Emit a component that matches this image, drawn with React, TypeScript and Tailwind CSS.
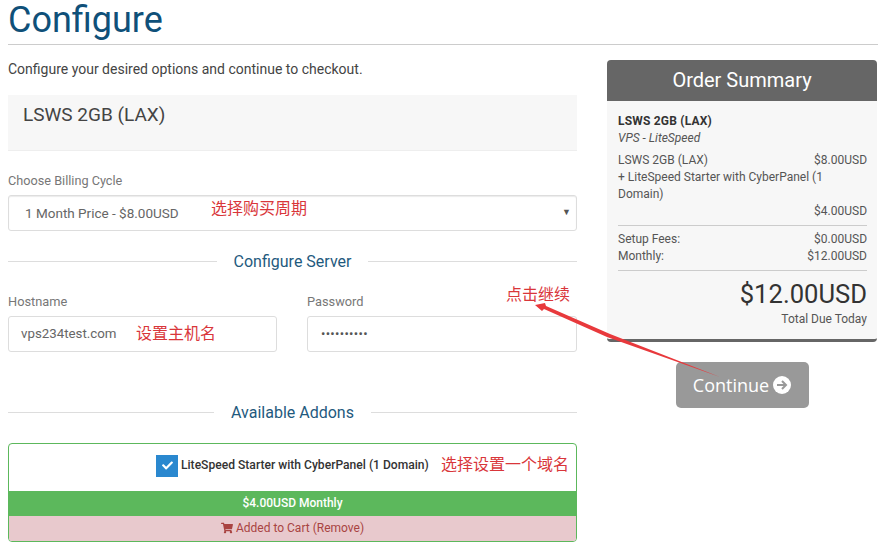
import React from "react";
import { FaShoppingCart, FaCheck } from "react-icons/fa";

const cjk = "absolute text-[16px] leading-[20px] text-[#d9363a] font-['Noto_Sans_CJK_SC',sans-serif] whitespace-nowrap";

function Divider({ title, gap }: { title: string; gap: string }) {
  return (
    <div className="flex items-center h-[20px]">
      <div className="flex-1 h-px mb-[2px] bg-[#dddddd]" />
      <div className={`text-[16px] leading-[20px] text-[#1f5a7e] text-center ${gap}`}>{title}</div>
      <div className="flex-1 h-px mb-[2px] bg-[#dddddd]" />
    </div>
  );
}

function Row({ left, right }: { left: string; right: string }) {
  return (
    <div className="flex justify-between h-[17px] leading-[17px]">
      <span>{left}</span>
      <span>{right}</span>
    </div>
  );
}

export default function App() {
  return (
    <div className="relative w-[885px] h-[549px] overflow-hidden bg-white font-['Roboto',sans-serif] text-[#333333]">
      <div className="pl-2 pr-[7px]">
        <h1 className="h-[45px] border-b border-[#cccccc] text-[36px] leading-[40px] text-[#0f5079] font-normal">Configure</h1>
        <div className="flex gap-[30px]">
          <div className="w-[569px]">
            <p className="mt-[16px] h-[17px] text-[14px] leading-[17px] text-[#444444]">Configure your desired options and continue to checkout.</p>
            <div className="mt-[17px] h-[56px] bg-[#f7f7f7] border-b border-[#eeeeee] px-[15px] pt-[9px] text-[19px] leading-[22px] text-[#444444]">LSWS 2GB (LAX)</div>
            <div className="mt-[22px] h-[16px] text-[12.7px] leading-[16px] text-[#777777]">Choose Billing Cycle</div>
            <div className="mt-[6px] h-[36px] border border-[#dddddd] rounded-[3px] shadow-[inset_0_1px_1px_rgba(0,0,0,0.08)] flex items-center justify-between pl-[16px] pr-[5px] text-[13.5px] text-[#666666]">
              <span className="pt-[1px]">1 Month Price - $8.00USD</span>
              <span className="text-[9px] text-[#555555]">▼</span>
            </div>
            <div className="mt-[21px]">
              <Divider title="Configure Server" gap="px-[17px]" />
            </div>
            <div className="mt-[22px] flex gap-[30px]">
              <div className="w-[269px]">
                <div className="h-[16px] text-[12.8px] leading-[16px] text-[#777777]">Hostname</div>
                <div className="mt-[6px] h-[36px] border border-[#dddddd] rounded-[3px] flex items-center pl-[12px] text-[13.3px] text-[#666666]">vps234test.com</div>
              </div>
              <div className="w-[270px]">
                <div className="h-[16px] text-[12.8px] leading-[16px] text-[#777777]">Password</div>
                <div className="mt-[6px] h-[36px] border border-[#dddddd] rounded-[3px] flex items-center pl-[13px] text-[13px] text-[#555555] tracking-[0.3px]">••••••••••</div>
              </div>
            </div>
            <div className="mt-[51px]">
              <Divider title="Available Addons" gap="px-[17px]" />
            </div>
            <div className="mt-[20px] h-[99px] border border-[#5cb85c] rounded-[4px] overflow-hidden flex flex-col">
              <div className="h-[47px] flex items-center pl-[147px] pb-[4px]">
                <span className="w-[22px] h-[22px] bg-[#2a88cf] flex items-center justify-center text-white">
                  <FaCheck className="text-[11px]" />
                </span>
                <span className="ml-[3px] text-[12.1px] font-medium text-[#333333] whitespace-nowrap">LiteSpeed Starter with CyberPanel (1 Domain)</span>
              </div>
              <div className="h-[25px] bg-[#5cb85c] text-white text-center text-[12px] leading-[25px] font-medium">$4.00USD Monthly</div>
              <div className="h-[25px] pb-[2px] bg-[#e8c9cd] text-[#a94442] text-[12px] flex items-center justify-center gap-[3px]">
                <FaShoppingCart className="text-[12px]" />
                <span>Added to Cart (Remove)</span>
              </div>
            </div>
          </div>
          <div className="w-[270px] pt-[15px]">
            <div className="rounded-[4px] overflow-hidden bg-[#f7f7f7] border-b-[3px] border-[#666666]">
              <div className="h-[41px] bg-[#666666] text-white text-center text-[20px] leading-[41px]">Order Summary</div>
              <div className="pl-[11px] pr-[10px] pt-[12px] pb-[11px] text-[12px] text-[#555555]">
                <div className="h-[17px] leading-[17px] font-bold text-[#333333] tracking-[0.2px]">LSWS 2GB (LAX)</div>
                <div className="h-[17px] leading-[17px] italic">VPS - LiteSpeed</div>
                <div className="mt-[5px]">
                  <Row left="LSWS 2GB (LAX)" right="$8.00USD" />
                  <div className="leading-[17px] w-[215px]">+ LiteSpeed Starter with CyberPanel (1 Domain)</div>
                  <div className="text-right h-[17px] leading-[17px]">$4.00USD</div>
                </div>
                <div className="mt-[5px] pt-[5px] border-t border-[#cccccc]">
                  <Row left="Setup Fees:" right="$0.00USD" />
                  <Row left="Monthly:" right="$12.00USD" />
                </div>
                <div className="mt-[5px] border-t border-[#cccccc] text-right">
                  <div className="mt-[6px] text-[25.6px] leading-[34px] text-[#333333]">$12.00USD</div>
                  <div className="mt-[0px] leading-[17px]">Total Due Today</div>
                </div>
              </div>
            </div>
            <div className="mt-[20px] flex justify-center">
              <div className="w-[133px] h-[46px] rounded-[5px] bg-[#999999] text-white flex items-center justify-center gap-[4px] text-[18px] font-['Open_Sans',sans-serif]">
                <span>Continue</span>
                <svg width="18" height="18" viewBox="0 0 18 18">
                  <circle cx="9" cy="9" r="9" fill="#ffffff" />
                  <path d="M4 9 H13 M9 5 L13 9 L9 13" fill="none" stroke="#999999" strokeWidth="2" />
                </svg>
              </div>
            </div>
          </div>
        </div>
      </div>

      <span className={`${cjk} left-[211px] top-[197px]`}>选择购买周期</span>
      <span className={`${cjk} left-[136px] top-[322px]`}>设置主机名</span>
      <span className={`${cjk} left-[506px] top-[283px]`}>点击继续</span>
      <span className={`${cjk} left-[441px] top-[453px]`}>选择设置一个域名</span>

      <svg className="absolute left-0 top-0 pointer-events-none" width="885" height="549" viewBox="0 0 885 549">
        <path d="M535 305 L545 303 L546 306 L610 334 L720 377 L607 337 L544 309 L542 311 Z" fill="#e8393c" />
      </svg>
    </div>
  );
}
